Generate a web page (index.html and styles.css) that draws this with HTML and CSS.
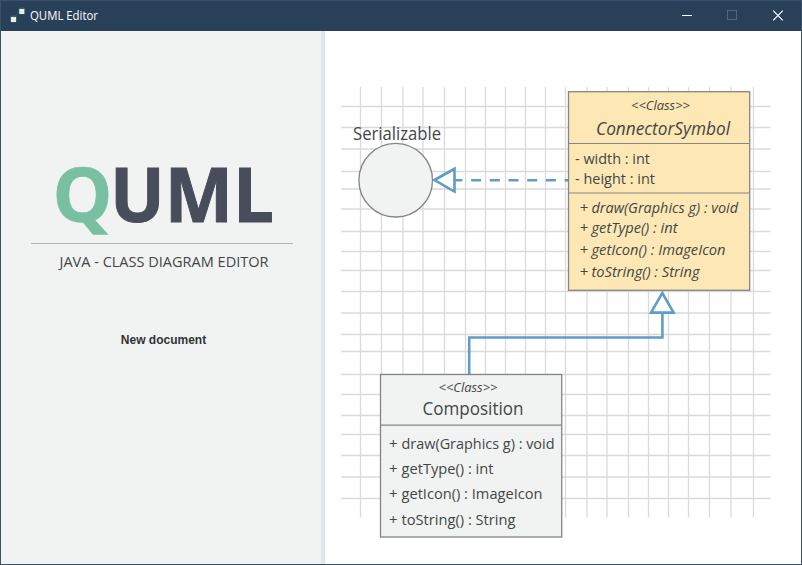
FILE: index.html
```html
<!DOCTYPE html>
<html lang="en">
<head>
<meta charset="utf-8">
<title>QUML Editor</title>
<link rel="stylesheet" href="styles.css">
</head>
<body>
<div class="window">
  <header class="titlebar">
    <svg class="app-icon" width="16" height="16" viewBox="0 0 16 16">
      <path class="icon-link" d="M4 11 12 3"/>
      <rect class="icon-halo" x="1" y="8.500" width="7" height="7" rx="2"/>
      <rect class="icon-halo" x="9.500" y="0.500" width="7" height="7" rx="2"/>
      <rect class="icon-node" x="2" y="10" width="5" height="5"/>
      <rect class="icon-node" x="10.300" y="2" width="5" height="5"/>
    </svg>
    <h1 class="title"><svg width="72" height="18"><text x="0" y="13" textLength="68" lengthAdjust="spacingAndGlyphs">QUML Editor</text></svg></h1>
    <div class="controls">
      <svg width="46" height="29"><path d="M14 14.500h10"/></svg>
      <svg class="disabled" width="46" height="29"><rect x="13.500" y="9.500" width="9" height="9"/></svg>
      <svg width="46" height="29"><path d="M13.200 9.700l9.600 9.600M22.800 9.700l-9.600 9.600"/></svg>
    </div>
  </header>
  <main class="content">
    <section class="welcome">
      <svg class="logo" width="320" height="120" viewBox="0 -22 320 120">
        <text class="logo-q" x="51.500" y="64.500" textLength="60" lengthAdjust="spacingAndGlyphs">Q</text>
        <text class="logo-uml" x="109" y="64.500" textLength="164" lengthAdjust="spacingAndGlyphs">UML</text>
      </svg>
      <div class="rule"></div>
      <svg class="tagline" width="320" height="24"><text x="58.500" y="17" textLength="209" lengthAdjust="spacingAndGlyphs">JAVA - CLASS DIAGRAM EDITOR</text></svg>
      <button class="new-document">New document</button>
    </section>
    <section class="preview">
      <svg class="diagram" width="476" height="533" viewBox="325 31 476 533">
        <path class="grid" d="M360.500 87V517.500M381.500 87V517.500M403 87V517.500M423 87V517.500M444.500 87V517.500M465.500 87V517.500M485.500 87V517.500M505.500 87V517.500M525.500 87V517.500M545.500 87V517.500M565.500 87V517.500M587 87V517.500M607 87V517.500M628.500 87V517.500M648.500 87V517.500M668.500 87V517.500M688.500 87V517.500M709.500 87V517.500M731 87V517.500M753.500 87V517.500"/>
        <path class="grid" d="M341 106.500H770.500M341 127.500H770.500M341 149H770.500M341 171.500H770.500M341 189H770.500M341 209H770.500M341 231.500H770.500M341 251.500H770.500M341 270.500H770.500M341 291.500H770.500M341 313H770.500M341 334.500H770.500M341 351.500H770.500M341 374.500H770.500M341 394.500H770.500M341 415.500H770.500M341 434.500H770.500M341 455.500H770.500M341 477H770.500M341 498.500H770.500"/>

        <path class="edge dashed" d="M452.400 180.300H568"/>
        <path class="edge arrow" d="M434.500 180 454.500 168.800V191.600Z"/>
        <path class="edge" d="M469.200 375V337.500H662.400V313"/>
        <path class="edge arrow" d="M662.300 293 673.600 312.600H651Z"/>

        <circle class="node" cx="395.700" cy="180.200" r="36.800"/>
        <text class="name" x="353" y="139.500" textLength="88" lengthAdjust="spacingAndGlyphs">Serializable</text>

        <rect class="node abstract" x="568.500" y="91.700" width="181.200" height="198.600"/>
        <path class="divider" d="M568.500 143.500H749.500M568.500 193H749.500"/>
        <g class="italic">
          <text class="stereotype" x="631" y="109.500" textLength="59" lengthAdjust="spacingAndGlyphs">&lt;&lt;Class&gt;&gt;</text>
          <text class="name" x="596" y="134.500" textLength="134" lengthAdjust="spacingAndGlyphs">ConnectorSymbol</text>
        </g>
        <text x="575" y="164" textLength="75" lengthAdjust="spacingAndGlyphs">- width : int</text>
        <text x="575" y="184" textLength="80" lengthAdjust="spacingAndGlyphs">- height : int</text>
        <g class="italic">
          <text x="579.500" y="213">+ <tspan x="591.500" textLength="146.500" lengthAdjust="spacingAndGlyphs">draw(Graphics g) : void</tspan></text>
          <text x="579.500" y="233">+ <tspan x="591.500" textLength="86" lengthAdjust="spacingAndGlyphs">getType() : int</tspan></text>
          <text x="579.500" y="255">+ <tspan x="591.500" textLength="134" lengthAdjust="spacingAndGlyphs">getIcon() : ImageIcon</tspan></text>
          <text x="579.500" y="277">+ <tspan x="591.500" textLength="108" lengthAdjust="spacingAndGlyphs">toString() : String</tspan></text>
        </g>

        <rect class="node" x="380.500" y="374.500" width="181.200" height="162.500"/>
        <path class="divider" d="M380.500 425.200H561.500"/>
        <text class="stereotype italic" x="438.500" y="391.700" textLength="59" lengthAdjust="spacingAndGlyphs">&lt;&lt;Class&gt;&gt;</text>
        <text class="name" x="422.500" y="414.500" textLength="101" lengthAdjust="spacingAndGlyphs">Composition</text>
        <text x="389" y="449">+ <tspan x="401.500" textLength="153" lengthAdjust="spacingAndGlyphs">draw(Graphics g) : void</tspan></text>
        <text x="389" y="474">+ <tspan x="401.500" textLength="92" lengthAdjust="spacingAndGlyphs">getType() : int</tspan></text>
        <text x="389" y="499">+ <tspan x="401.500" textLength="141" lengthAdjust="spacingAndGlyphs">getIcon() : ImageIcon</tspan></text>
        <text x="389" y="524.500">+ <tspan x="401.500" textLength="114" lengthAdjust="spacingAndGlyphs">toString() : String</tspan></text>
      </svg>
    </section>
  </main>
</div>
</body>
</html>
```
FILE: styles.css
```css
* { box-sizing: border-box; }
body { margin: 0; overflow: hidden; }
svg { display: block; }

.window {
  display: flex;
  flex-direction: column;
  width: 802px;
  height: 565px;
  border: 1px solid #3a536b;
  background: #fff;
  font-family: "Open Sans", "Noto Sans", sans-serif;
}

.titlebar {
  display: flex;
  align-items: flex-start;
  height: 30px;
  flex: none;
  background: #284158;
}
.app-icon { margin: 6px 0 0 8px; }
.icon-link { stroke: #34685f; stroke-width: 1; stroke-dasharray: 1 1; }
.icon-halo { fill: #33665f; }
.icon-node { fill: #e9eeec; }
.title { margin: 6px 0 0 5px; font-size: 12px; font-weight: 400; line-height: 18px; }
.title text { fill: #fff; }
.controls { display: flex; margin-left: auto; }
.controls svg { fill: none; stroke: #fff; stroke-width: 1; }
.controls svg:last-child { stroke-width: 1.2; margin-right: -5px; }
.controls .disabled { stroke: #53677a; }

.content { display: flex; flex: 1; min-height: 0; }

.welcome {
  display: flex;
  flex-direction: column;
  align-items: flex-start;
  width: 324px;
  border-right: 4px solid #e1e5eb;
  background: #f1f3f2;
}
.logo { margin: 104px 0 -22px; font-size: 75px; font-weight: 700; }
.logo-q { fill: #79c0a2; stroke: #79c0a2; stroke-width: .6; }
.logo-uml { fill: #484d5c; stroke: #484d5c; stroke-width: 1; }
.rule { width: 262px; height: 1px; margin: 10px 0 0 30px; background: #b0b3b2; }
.tagline { margin-top: 6px; font-size: 15px; }
.tagline text { fill: #414645; }
.new-document {
  align-self: stretch;
  margin-top: 58px;
  padding: 0 0 0 5px;
  border: 0;
  background: none;
  color: #303335;
  font: bold 12px/16px "Liberation Sans", sans-serif;
  text-align: center;
}

.preview { flex: 1; }
.diagram { font-size: 15px; fill: #424746; }
.grid { stroke: #dadada; stroke-width: 1.300; }
.edge { fill: none; stroke: #5f9dc7; stroke-width: 2.600; }
.arrow { fill: #fff; }
.dashed { stroke-dasharray: 10 8.700; }
.node { fill: #f1f3f2; stroke: #858585; stroke-width: 1.300; }
.abstract { fill: #fde8b5; }
.divider { stroke: #858585; stroke-width: 1.200; }
.italic { font-style: italic; }
.name { font-size: 17.500px; }
.stereotype { font-size: 12px; }
```
